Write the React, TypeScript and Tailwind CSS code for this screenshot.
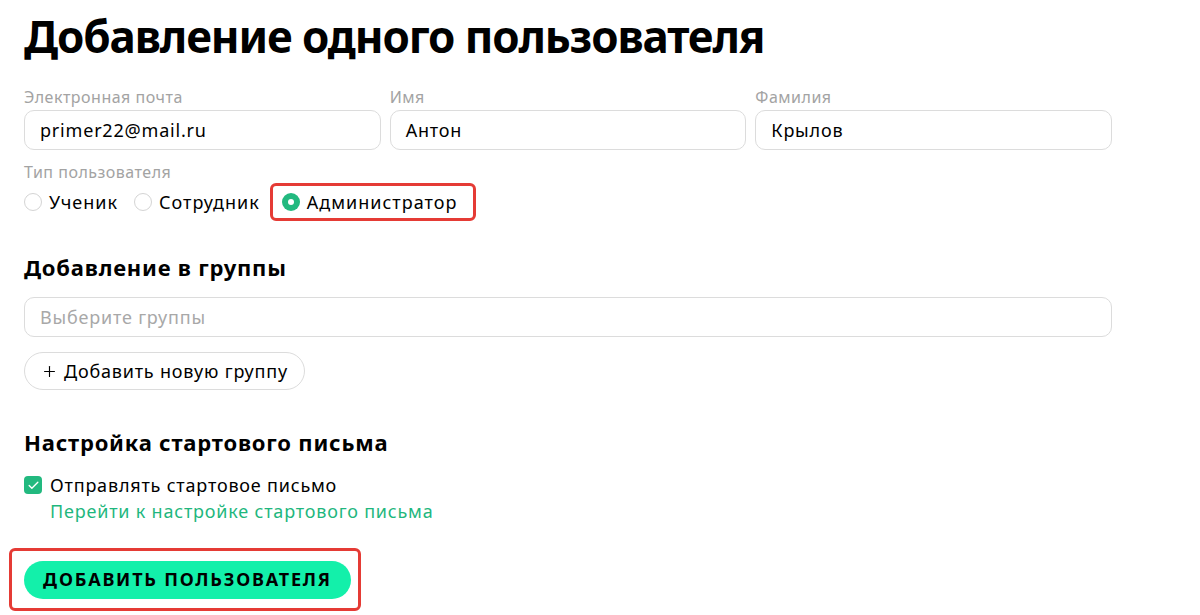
import { Check, Plus } from 'lucide-react'

const font = { fontFamily: '"Noto Sans", "Open Sans", sans-serif' }

function Field({ label, value }: { label: string; value: string }) {
  return (
    <div className="flex flex-col">
      <span className="text-[16px] leading-[20px] tracking-[0.5px] text-[#a3a3a3] mb-[3px]">{label}</span>
      <div className="h-[40px] rounded-[10px] border border-[#dcdcdc] flex items-center px-[15px] text-[18px] tracking-[0.8px] text-black">
        {value}
      </div>
    </div>
  )
}

function Radio({ label, checked }: { label: string; checked?: boolean }) {
  return (
    <div className="flex items-center gap-[7px]">
      {checked ? (
        <span className="w-[18px] h-[18px] rounded-full bg-[#22b97f] flex items-center justify-center">
          <span className="w-[6px] h-[6px] rounded-full bg-white" />
        </span>
      ) : (
        <span className="w-[18px] h-[18px] rounded-full border border-[#d4d4d4] bg-white" />
      )}
      <span className="text-[18px] tracking-[1px] text-black">{label}</span>
    </div>
  )
}

export default function App() {
  return (
    <div className="w-[1200px] h-[615px] bg-white overflow-hidden px-[24px] pt-[8px]" style={font}>
      <h1 className="text-[44px] leading-[56px] font-bold text-black tracking-[-1.1px]">
        Добавление одного пользователя
      </h1>

      <div className="grid grid-cols-3 gap-[9px] w-[1088px] mt-[23px]">
        <Field label="Электронная почта" value="primer22@mail.ru" />
        <Field label="Имя" value="Антон" />
        <Field label="Фамилия" value="Крылов" />
      </div>

      <div className="mt-[12px] text-[16px] leading-[20px] tracking-[0.5px] text-[#a3a3a3]">Тип пользователя</div>
      <div className="flex items-center gap-[16px] mt-[1px]">
        <Radio label="Ученик" />
        <Radio label="Сотрудник" />
        <div className="border-[3px] border-[#e53b35] rounded-[6px] h-[38px] pl-[9px] pr-[16px] flex items-center -ml-[6px]">
          <Radio label="Администратор" checked />
        </div>
      </div>

      <h2 className="mt-[31px] text-[22px] leading-[30px] tracking-[0.8px] font-bold text-black">Добавление в группы</h2>
      <div className="mt-[15px] w-[1088px] h-[40px] rounded-[10px] border border-[#dcdcdc] flex items-center px-[15px] text-[18px] tracking-[0.8px] text-[#a8a8a8]">
        Выберите группы
      </div>
      <button className="mt-[15px] h-[38px] rounded-full border border-[#dcdcdc] px-[16px] flex items-center gap-[6px] text-[18px] tracking-[0.8px] text-black bg-white">
        <Plus size={17} strokeWidth={1.6} />
        Добавить новую группу
      </button>

      <h2 className="mt-[37px] text-[22px] leading-[30px] tracking-[0.8px] font-bold text-black">Настройка стартового письма</h2>
      <div className="mt-[16px] flex items-center gap-[8px]">
        <span className="w-[18px] h-[18px] rounded-[4px] bg-[#22b97f] flex items-center justify-center">
          <Check size={13} strokeWidth={2.5} color="white" />
        </span>
        <span className="text-[18px] leading-[24px] tracking-[0.8px] text-black">Отправлять стартовое письмо</span>
      </div>
      <div className="pl-[26px] mt-[1px] text-[18px] leading-[26px] tracking-[0.8px] text-[#1fb77e]">
        Перейти к настройке стартового письма
      </div>

      <div className="mt-[24px] -ml-[15px] w-[352px] h-[63px] border-[3px] border-[#e53b35] rounded-[6px] flex items-center pl-[12px]">
        <button className="h-[38px] w-[327px] rounded-full bg-[#13f0aa] text-[18px] font-bold tracking-[1.8px] text-black">
          ДОБАВИТЬ ПОЛЬЗОВАТЕЛЯ
        </button>
      </div>
    </div>
  )
}
